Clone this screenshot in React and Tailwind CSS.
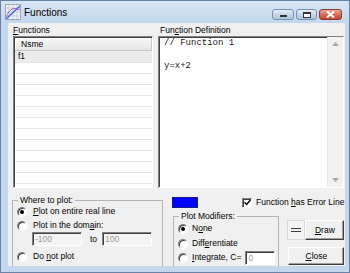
import React from 'react';

const ui = "font-['Liberation_Sans',Arial,sans-serif] text-[8.5px] text-black whitespace-nowrap";

function Radio({ checked }) {
  return (
    <span className="flex h-[10px] w-[10px] shrink-0 items-center justify-center rounded-full border border-t-[#808080] border-l-[#808080] border-b-[#ffffff] border-r-[#ffffff] bg-white shadow-[inset_1px_1px_0_#404040]">
      {checked && <span className="h-[4px] w-[4px] rounded-full bg-black" />}
    </span>
  );
}

function Check() {
  return (
    <span className="flex h-[10px] w-[10px] shrink-0 items-center justify-center border border-t-[#808080] border-l-[#808080] border-b-[#ffffff] border-r-[#ffffff] bg-white shadow-[inset_1px_1px_0_#404040]">
      <svg width="7" height="7" viewBox="0 0 7 7">
        <path d="M0.5 3.2 L2.6 5.4 L6.5 1" fill="none" stroke="#000" strokeWidth="1.5" />
      </svg>
    </span>
  );
}

function Field({ value, w, white }) {
  return (
    <div
      className={`h-[14px] border border-t-[#808080] border-l-[#808080] border-b-[#ffffff] border-r-[#ffffff] pl-[2px] leading-[12px] text-[#9a9a9a] shadow-[inset_1px_1px_0_#404040] ${w} ${white ? 'bg-white' : 'bg-[#f4f4f4]'}`}
    >
      {value}
    </div>
  );
}

function Btn({ children, className }) {
  return (
    <div
      className={`flex items-center justify-center border border-t-[#ffffff] border-l-[#ffffff] border-r-[#404040] border-b-[#404040] bg-[#f0f0f0] shadow-[inset_-1px_-1px_0_#a0a0a0] ${className}`}
    >
      {children}
    </div>
  );
}

function CaptionBtn({ children, red, w }) {
  return (
    <div
      className={`flex h-[11px] items-center justify-center rounded-[3px] border ${w} ${
        red
          ? 'border-[#8d3a2c] bg-gradient-to-b from-[#e9a99b] via-[#d7705c] to-[#c2452c]'
          : 'border-[#7690b0] bg-gradient-to-b from-[#e6eef8] via-[#c6d6ea] to-[#aec4de]'
      }`}
    >
      {children}
    </div>
  );
}

export default function App() {
  return (
    <div className={`${ui} flex h-[273px] w-[350px] flex-col overflow-hidden border border-[#6584a8] bg-[#c3d7ee]`}>
      {/* title bar */}
      <div className="flex h-[22px] shrink-0 items-center bg-gradient-to-b from-[#d8e6f5] to-[#c3d7ee] pl-[4px] pr-[7px]">
        <svg width="16" height="16" viewBox="0 0 16 16">
          <rect x="0.5" y="0.5" width="15" height="15" fill="#f4f6fa" stroke="#9aa8bb" />
          <path d="M4 1v14M8 1v14M12 1v14M1 4h14M1 8h14M1 12h14" stroke="#c4ccd8" strokeWidth="1" />
          <path d="M1 15 L15 2" stroke="#3b5fd0" strokeWidth="1.3" />
          <path d="M1 13 C5 4, 9 3, 15 6" fill="none" stroke="#9a5ad0" strokeWidth="1" />
        </svg>
        <span className="ml-[3px] font-['Liberation_Sans',Arial,sans-serif] text-[10px] text-black">Functions</span>
        <div className="ml-auto flex gap-[2px] self-start pt-[8px]">
          <CaptionBtn w="w-[22px]">
            <span className="mt-[3px] h-[2px] w-[7px] border border-[#333] bg-white" />
          </CaptionBtn>
          <CaptionBtn w="w-[21px]">
            <span className="h-[6px] w-[8px] border border-[#333] border-t-2 bg-white" />
          </CaptionBtn>
          <CaptionBtn red w="w-[23px]">
            <svg width="9" height="7" viewBox="0 0 9 7">
              <path d="M1 0.5 L8 6.5 M8 0.5 L1 6.5" stroke="#fff" strokeWidth="2" />
            </svg>
          </CaptionBtn>
        </div>
      </div>

      {/* client area */}
      <div className="ml-[7px] mr-[4px] h-[243px] shrink-0 overflow-hidden bg-[#f0f0f0]">
        <div className="mt-[1px] flex gap-[5px] pl-[5px] pr-[1px]">
          <div className="flex w-[140px] flex-col">
            <div className="h-[12px] leading-[12px]">
              <u>F</u>unctions
            </div>
            <div className="h-[152px] overflow-hidden border border-t-[#808080] border-l-[#808080] border-b-[#ffffff] border-r-[#ffffff] bg-white shadow-[inset_1px_1px_0_#404040]">
              <div className="ml-[1px] mt-[1px] flex h-[13px] items-center border-b border-r border-[#c8c8c8] bg-gradient-to-b from-[#f8f8f8] to-[#e6e6e6] pl-[6px] shadow-[inset_1px_1px_0_#fff]">
                Nsme
              </div>
              <div className="ml-[1px] flex h-[12px] items-center border-b border-[#e4e4e4] bg-[#ececec] pl-[3px]">f1</div>
              {Array.from({ length: 12 }).map((_, i) => (
                <div key={i} className="ml-[1px] h-[11px] border-b border-[#e8e8e8]" />
              ))}
            </div>
          </div>
          <div className="flex flex-1 flex-col">
            <div className="h-[12px] pl-[2px] leading-[12px]">
              Fun<u>c</u>tion Definition
            </div>
            <div className="flex h-[152px] border border-t-[#808080] border-l-[#808080] border-b-[#ffffff] border-r-[#ffffff] bg-white shadow-[inset_1px_1px_0_#404040]">
              <div className="flex-1 pl-[5px] pt-[1px] font-['Liberation_Mono','Courier_New',monospace] text-[9px] leading-[11.5px] text-[#222]">
                <div>// Function 1</div>
                <div>&nbsp;</div>
                <div>y=x+2</div>
              </div>
              <div className="flex w-[16px] flex-col items-center justify-between border-l border-[#e6e6e6] bg-[#f2f2f2] py-[5px]">
                <svg width="7" height="4" viewBox="0 0 7 4">
                  <path d="M0 4 L3.5 0 L7 4Z" fill="#a8a8a8" />
                </svg>
                <svg width="7" height="4" viewBox="0 0 7 4">
                  <path d="M0 0 L3.5 4 L7 0Z" fill="#a8a8a8" />
                </svg>
              </div>
            </div>
          </div>
        </div>

        {/* bottom section */}
        <div className="flex pl-[4px] pr-[2px]">
          <fieldset className="mt-[7px] h-[90px] w-[151px] shrink-0 border border-[#b4b4b4] pl-[4px]">
            <legend className="ml-[1px] px-[2px] leading-[11px]">Where to plot:</legend>
            <div className="flex h-[11px] items-center gap-[6px]">
              <Radio checked />
              <span>
                <u>P</u>lot on entire real line
              </span>
            </div>
            <div className="mt-[3px] flex h-[11px] items-center gap-[6px]">
              <Radio />
              <span>
                Plot in the dom<u>a</u>in:
              </span>
            </div>
            <div className="mt-[1px] flex items-center pl-[15px]">
              <Field value="-100" w="w-[50px]" />
              <span className="w-[20px] pl-[8px]">to</span>
              <Field value="100" w="w-[50px]" />
            </div>
            <div className="mt-[5px] flex h-[11px] items-center gap-[6px]">
              <Radio />
              <span>
                Do <u>n</u>ot plot
              </span>
            </div>
          </fieldset>

          <div className="ml-[9px] flex flex-1 flex-col">
            <div className="mt-[9px] flex h-[11px] items-center">
              <div className="h-[11px] w-[26px] border border-[#1a1a80] bg-[#0000ff]" />
              <div className="ml-auto flex items-center gap-[4px]">
                <Check />
                <span>
                  Function <u>h</u>as Error Line
                </span>
              </div>
            </div>
            <div className="mt-[3px] flex">
              <fieldset className="ml-[1px] h-[70px] w-[105px] shrink-0 border border-[#b4b4b4] pl-[4px]">
                <legend className="ml-[1px] px-[2px] leading-[11px]">Plot Modifiers:</legend>
                <div className="mt-[1px] flex h-[11px] items-center gap-[4px]">
                  <Radio checked />
                  <span>
                    N<u>o</u>ne
                  </span>
                </div>
                <div className="mt-[4px] flex h-[11px] items-center gap-[4px]">
                  <Radio />
                  <span>
                    Diff<u>e</u>rentiate
                  </span>
                </div>
                <div className="mt-[2px] flex h-[13px] items-center gap-[4px]">
                  <Radio />
                  <span>
                    <u>I</u>ntegrate, C=
                  </span>
                  <div className="ml-auto mr-[3px]">
                    <Field value="0" w="w-[30px]" white />
                  </div>
                </div>
              </fieldset>
              <div className="ml-[8px] mt-[9px] flex flex-col">
                <div className="flex">
                  <div className="flex h-[20px] w-[18px] flex-col items-center justify-center gap-[2px] border border-[#d8d8d8] bg-[#f4f4f4]">
                    <span className="h-[1px] w-[10px] bg-[#404040]" />
                    <span className="h-[1px] w-[10px] bg-[#404040]" />
                  </div>
                  <Btn className="h-[20px] w-[39px]">
                    <span>
                      <u>D</u>raw
                    </span>
                  </Btn>
                </div>
                <Btn className="ml-[1px] mt-[7px] h-[18px] w-[56px]">
                  <span>
                    <u>C</u>lose
                  </span>
                </Btn>
              </div>
            </div>
          </div>
        </div>
      </div>
    </div>
  );
}
